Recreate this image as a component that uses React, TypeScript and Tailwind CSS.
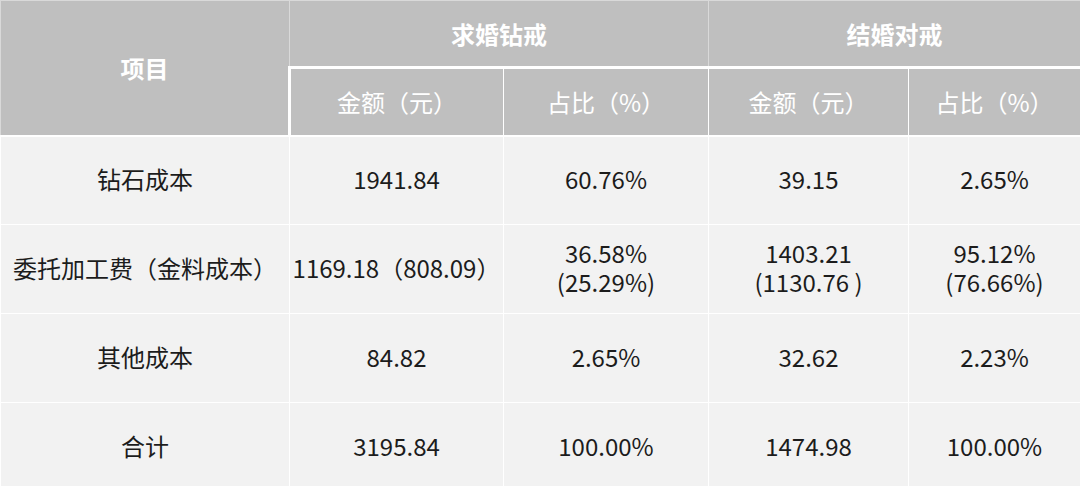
import { FC } from 'react';

const rows: { name: string; a: string; b: string; c: string; d: string }[] = [
  { name: '钻石成本', a: '1941.84', b: '60.76%', c: '39.15', d: '2.65%' },
  {
    name: '委托加工费（金料成本）',
    a: '1169.18（808.09）',
    b: '36.58%\n(25.29%)',
    c: '1403.21\n(1130.76 )',
    d: '95.12%\n(76.66%)',
  },
  { name: '其他成本', a: '84.82', b: '2.65%', c: '32.62', d: '2.23%' },
  { name: '合计', a: '3195.84', b: '100.00%', c: '1474.98', d: '100.00%' },
];

const Cell: FC<{ text: string }> = ({ text }) => (
  <td className="border border-white pb-1 text-center align-middle leading-[29px] whitespace-pre">{text}</td>
);

const App: FC = () => {
  return (
    <div
      className="w-[1080px] h-[486px] overflow-hidden bg-[#f2f2f2]"
      style={{ fontFamily: '"Noto Sans CJK SC", "Noto Sans", sans-serif' }}
    >
      <table className="w-[1080px] table-fixed border-collapse text-[24px] text-[#1c1c1c]">
        <colgroup>
          <col className="w-[289px]" />
          <col className="w-[214px]" />
          <col className="w-[205px]" />
          <col className="w-[200px]" />
          <col className="w-[172px]" />
        </colgroup>
        <thead className="bg-[#bfbfbf] text-white">
          <tr className="h-[67px]">
            <th rowSpan={2} className="border border-[#d9d9d9] border-b-2 border-b-white font-bold">
              项目
            </th>
            <th colSpan={2} className="border border-[#d9d9d9] border-b-[3px] border-b-white font-bold">
              求婚钻戒
            </th>
            <th colSpan={2} className="border border-[#d9d9d9] border-b-[3px] border-b-white font-bold">
              结婚对戒
            </th>
          </tr>
          <tr className="h-[68px]">
            <th className="border border-white border-l-[3px] border-b-2 font-normal">金额（元）</th>
            <th className="border border-white border-b-2 font-normal">占比（%）</th>
            <th className="border border-white border-b-2 font-normal">金额（元）</th>
            <th className="border border-white border-b-2 font-normal">占比（%）</th>
          </tr>
        </thead>
        <tbody>
          {rows.map((r) => (
            <tr key={r.name} className="h-[89px]">
              <Cell text={r.name} />
              <Cell text={r.a} />
              <Cell text={r.b} />
              <Cell text={r.c} />
              <Cell text={r.d} />
            </tr>
          ))}
        </tbody>
      </table>
    </div>
  );
};

export default App;
